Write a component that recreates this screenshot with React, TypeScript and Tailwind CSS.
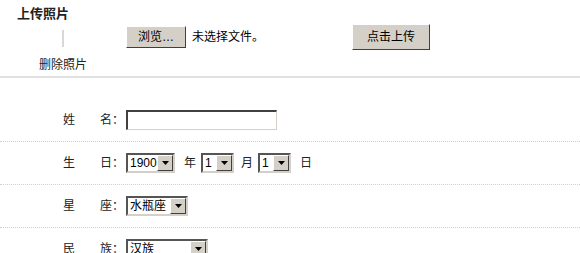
const font = { fontFamily: '"Liberation Sans", "Noto Sans CJK SC", sans-serif' };

function Arrow() {
  return (
    <div className="flex h-full w-[16px] items-center justify-center border border-t-white border-l-white border-r-[#404040] border-b-[#404040] bg-[#d4d0c8]">
      <svg width="7" height="4" viewBox="0 0 7 4">
        <path d="M0 0h7L3.5 4z" fill="#000" />
      </svg>
    </div>
  );
}

function FakeSelect({ value, width }: { value: string; width: string }) {
  return (
    <div
      className={`flex h-[20px] ${width} items-stretch border-2 border-t-[#555] border-l-[#555] border-r-[#d4d0c8] border-b-[#d4d0c8] bg-white`}
    >
      <span className="flex-1 pl-[2px] text-[12px] leading-[16px] text-black">{value}</span>
      <Arrow />
    </div>
  );
}

function Row({ label1, label2, children }: { label1: string; label2: string; children: React.ReactNode }) {
  return (
    <div className="flex h-[43px] items-center border-b border-dotted border-[#d0d0d0]">
      <div className="flex w-[126px] items-center pl-[63px] pr-[4px] text-[12px] text-[#222]">
        <span>{label1}</span>
        <span className="ml-[25px]">{label2}：</span>
      </div>
      <div className="flex items-center text-[12px] text-[#222]">{children}</div>
    </div>
  );
}

export default function App() {
  return (
    <div className="h-[253px] w-[580px] overflow-hidden bg-white" style={font}>
      {/* 上传照片 */}
      <div className="pl-[17px] pt-[6px] text-[13px] leading-[16px] font-bold text-[#222]">上传照片</div>
      <div className="flex">
        <div className="flex w-[126px] flex-col items-center">
          <div className="mt-[8px] h-[17px] w-[2px] bg-[#d8d8d8]" />
          <div className="mt-[11px] text-[12px] leading-[14px] text-[#222]">删除照片</div>
        </div>
        <div className="flex h-[30px] items-center">
          <div className="flex w-[226px] items-center">
            <div className="flex h-[22px] w-[60px] items-center justify-center border border-t-white border-l-white border-r-[#404040] border-b-[#404040] bg-[#d4d0c8] text-[12px] text-black">
              浏览…
            </div>
            <span className="ml-[6px] text-[12px] text-black">未选择文件。</span>
          </div>
          <div className="flex h-[26px] w-[78px] items-center justify-center border border-t-white border-l-white border-r-[#404040] border-b-[#404040] bg-[#d4d0c8] text-[12px] text-black">
            点击上传
          </div>
        </div>
      </div>
      <div className="mt-[4px] h-[2px] w-full bg-[#e0e0e0]" />

      {/* 表单 */}
      <div className="pt-[21px]">
        <Row label1="姓" label2="名">
          <div className="h-[20px] w-[151px] border-2 border-t-[#404040] border-l-[#404040] border-r-[#d4d0c8] border-b-[#d4d0c8] border-r-1 border-b-1 bg-white" />
        </Row>
        <Row label1="生" label2="日">
          <FakeSelect value="1900" width="w-[49px]" />
          <span className="ml-[9px]">年</span>
          <span className="ml-[5px]" />
          <FakeSelect value="1" width="w-[33px]" />
          <span className="ml-[7px]">月</span>
          <span className="ml-[5px]" />
          <FakeSelect value="1" width="w-[33px]" />
          <span className="ml-[9px]">日</span>
        </Row>
        <Row label1="星" label2="座">
          <FakeSelect value="水瓶座" width="w-[62px]" />
        </Row>
        <Row label1="民" label2="族">
          <FakeSelect value="汉族" width="w-[82px]" />
        </Row>
      </div>
    </div>
  );
}
